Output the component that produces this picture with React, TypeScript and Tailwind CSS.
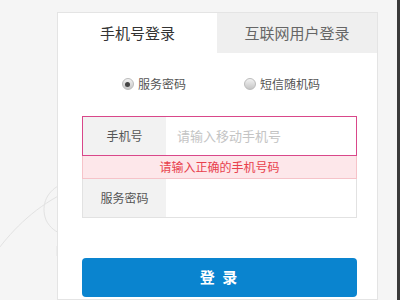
import React from "react";

const font = { fontFamily: '"Noto Sans CJK SC", "Noto Sans", sans-serif' };

export default function App() {
  return (
    <div
      className="relative flex h-[300px] w-[400px] overflow-hidden bg-[#f5f5f5]"
      style={font}
    >
      <Decor />
      <div className="w-[57px] shrink-0" />
      <LoginPanel />
      <div className="flex-1" />
      <div className="w-[3px] shrink-0 bg-[#3a3a3a]" />
    </div>
  );
}

function Decor() {
  return (
    <svg
      className="absolute left-0 top-0"
      width="80"
      height="300"
      viewBox="0 0 80 300"
      fill="none"
    >
      <path d="M-4 252 C 14 228, 36 206, 70 190" stroke="#e2e2e2" strokeWidth="1" />
      <path d="M62 184 C 48 190, 40 204, 46 220 C 50 228, 56 232, 62 234" stroke="#e2e2e2" strokeWidth="1" />
      <path d="M57 246 L57 256" stroke="#e2e2e2" strokeWidth="1" />
    </svg>
  );
}

function LoginPanel() {
  return (
    <div className="relative mt-[12px] w-[321px] shrink-0 border border-[#e4e4e4] bg-white">
      <div className="flex h-[40px]">
        <div className="flex w-[159px] items-center justify-center text-[15px] text-[#333]">
          手机号登录
        </div>
        <div className="flex flex-1 items-center justify-center bg-[#efefef] text-[15px] text-[#666]">
          互联网用户登录
        </div>
      </div>

      <div className="ml-[7px] mt-[22px] flex items-center justify-center gap-[58px] text-[12px] text-[#555]">
        <Radio checked label="服务密码" />
        <Radio label="短信随机码" />
      </div>

      <div className="ml-[24px] mt-[23px] w-[275px]">
        <div className="flex h-[40px] border border-[#d9478a]">
          <div className="flex w-[83px] items-center justify-center bg-[#f2f2f2] text-[12px] text-[#555]">
            手机号
          </div>
          <div className="flex flex-1 items-center pl-[11px] text-[13px] text-[#c4c4c4]">
            请输入移动手机号
          </div>
        </div>
        <div className="flex h-[23px] items-center justify-center border-x border-b border-[#f6c3c9] bg-[#fde7ea] text-[12px] text-[#e8404c]">
          请输入正确的手机号码
        </div>
        <div className="flex h-[39px] border-x border-b border-[#e2e2e2]">
          <div className="flex w-[83px] items-center justify-center bg-[#f2f2f2] text-[12px] text-[#555]">
            服务密码
          </div>
          <div className="flex-1" />
        </div>

        <button className="mt-[40px] flex h-[39px] w-full items-center justify-center rounded-[4px] bg-[#0a84cf] text-[15px] font-bold tracking-[2px] text-white">
          登 录
        </button>
      </div>
    </div>
  );
}

function Radio({ checked, label }: { checked?: boolean; label: string }) {
  return (
    <div className="flex items-center gap-[4px]">
      <span className="flex h-[12px] w-[12px] items-center justify-center rounded-full border border-[#bbbbbb] bg-gradient-to-b from-[#f2f2f2] to-[#c6c6c6]">
        {checked && <span className="h-[5px] w-[5px] rounded-full bg-[#444]" />}
      </span>
      <span>{label}</span>
    </div>
  );
}
